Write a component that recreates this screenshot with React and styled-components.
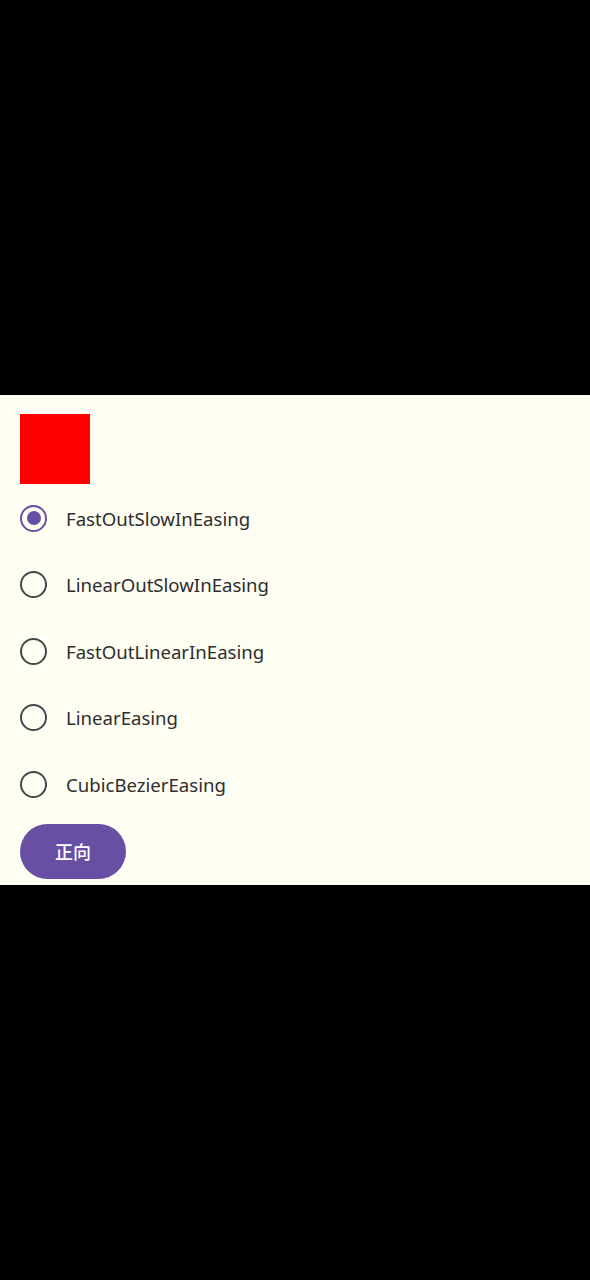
import React, { useState } from "react";
import styled, { createGlobalStyle } from "styled-components";

const Global = createGlobalStyle`
  html, body { margin: 0; padding: 0; background: #000; }
  body { font-family: "Noto Sans", "Noto Sans CJK SC", sans-serif; }
`;

const Screen = styled.div`
  width: 590px;
  height: 1280px;
  background: #000;
  display: flex;
  flex-direction: column;
`;

const Spacer = styled.div`
  height: ${(p) => p.$h}px;
  flex-shrink: 0;
`;

const Content = styled.div`
  height: 490px;
  background: #fffef3;
  padding: 19px 20px 0;
  box-sizing: border-box;
  display: flex;
  flex-direction: column;
`;

const Box = styled.div`
  width: 70px;
  height: 70px;
  background: #ff0000;
`;

const List = styled.div`
  display: flex;
  flex-direction: column;
  margin-top: 1px;
`;

const Row = styled.label`
  display: flex;
  align-items: center;
  height: 66.5px;
  cursor: pointer;
`;

const Radio = styled.span`
  width: 27px;
  height: 27px;
  box-sizing: border-box;
  border-radius: 50%;
  border: 2.6px solid ${(p) => (p.$on ? "#6750a4" : "#49454f")};
  display: flex;
  align-items: center;
  justify-content: center;
  flex-shrink: 0;
  &::after {
    content: "";
    width: 14px;
    height: 14px;
    border-radius: 50%;
    background: #6750a4;
    display: ${(p) => (p.$on ? "block" : "none")};
  }
`;

const Label = styled.span`
  margin-left: 19px;
  font-size: 18.6px;
  color: #2e2d30;
  letter-spacing: 0;
`;

const Button = styled.button`
  margin-top: 6px;
  width: 106px;
  height: 55px;
  border-radius: 28px;
  border: none;
  background: #6750a4;
  color: #fff;
  font-family: "Noto Sans CJK SC", sans-serif;
  font-size: 18px;
  font-weight: 500;
  display: flex;
  align-items: center;
  justify-content: center;
  padding: 0;
`;

const options = [
  "FastOutSlowInEasing",
  "LinearOutSlowInEasing",
  "FastOutLinearInEasing",
  "LinearEasing",
  "CubicBezierEasing",
];

export default function App() {
  const [sel, setSel] = useState(0);
  return (
    <Screen>
      <Global />
      <Spacer $h={395} />
      <Content>
        <Box />
        <List>
          {options.map((o, i) => (
            <Row key={o} onClick={() => setSel(i)}>
              <Radio $on={sel === i} />
              <Label>{o}</Label>
            </Row>
          ))}
        </List>
        <Button>正向</Button>
      </Content>
    </Screen>
  );
}
